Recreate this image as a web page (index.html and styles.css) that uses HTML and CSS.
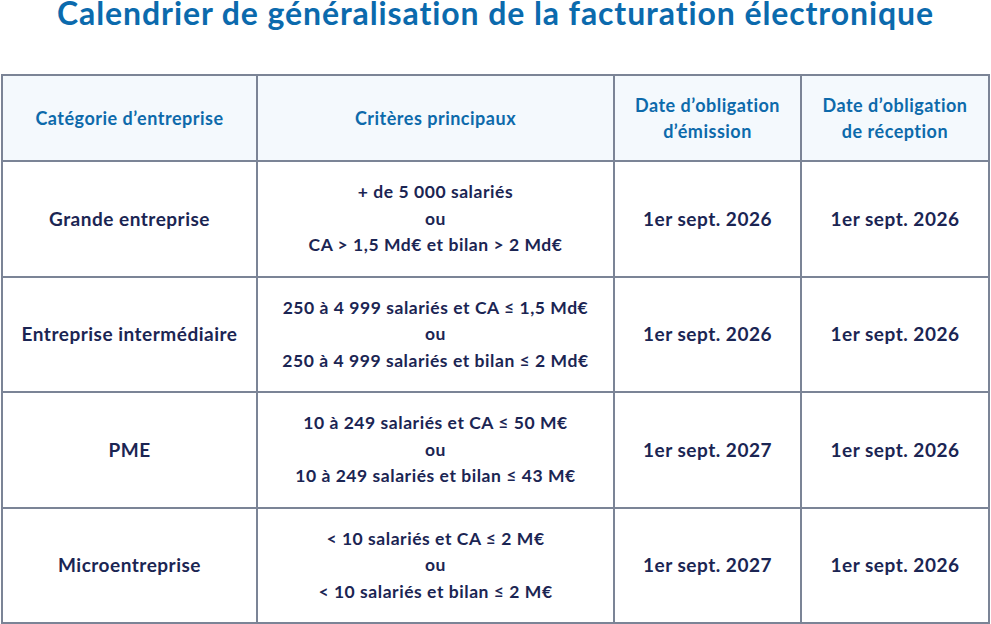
FILE: index.html
```html
<!DOCTYPE html>
<html lang="fr">
<head>
<meta charset="utf-8">
<title>Calendrier</title>
<link rel="stylesheet" href="styles.css">
</head>
<body>
<h1 class="title">Calendrier de généralisation de la facturation électronique</h1>
<table class="cal">
  <colgroup>
    <col class="c1"><col class="c2"><col class="c3"><col class="c4">
  </colgroup>
  <thead>
    <tr>
      <th>Catégorie d’entreprise</th>
      <th>Critères principaux</th>
      <th>Date d’obligation<br>d’émission</th>
      <th>Date d’obligation<br>de réception</th>
    </tr>
  </thead>
  <tbody>
    <tr>
      <td>Grande entreprise</td>
      <td class="crit">+ de 5 000 salariés<br>ou<br>CA &gt; 1,5 Md€ et bilan &gt; 2 Md€</td>
      <td>1er sept. 2026</td>
      <td>1er sept. 2026</td>
    </tr>
    <tr>
      <td>Entreprise intermédiaire</td>
      <td class="crit">250 à 4 999 salariés et CA ≤ 1,5 Md€<br>ou<br>250 à 4 999 salariés et bilan ≤ 2 Md€</td>
      <td>1er sept. 2026</td>
      <td>1er sept. 2026</td>
    </tr>
    <tr>
      <td>PME</td>
      <td class="crit">10 à 249 salariés et CA ≤ 50 M€<br>ou<br>10 à 249 salariés et bilan ≤ 43 M€</td>
      <td>1er sept. 2027</td>
      <td>1er sept. 2026</td>
    </tr>
    <tr>
      <td>Microentreprise</td>
      <td class="crit">&lt; 10 salariés et CA ≤ 2 M€<br>ou<br>&lt; 10 salariés et bilan ≤ 2 M€</td>
      <td>1er sept. 2027</td>
      <td>1er sept. 2026</td>
    </tr>
  </tbody>
</table>
</body>
</html>
```
FILE: styles.css
```css
html, body {
  margin: 0;
  padding: 0;
  background: #ffffff;
}
body {
  font-family: "Lato", "Open Sans", sans-serif;
  font-weight: 700;
}
.title {
  margin: 0;
  height: 74px;
  line-height: 26px;
  text-align: center;
  font-size: 32px;
  letter-spacing: 0.9px;
  font-weight: 700;
  color: #0b6aad;
  white-space: nowrap;
}
.cal {
  margin-left: 1px;
  width: 989px;
  border-collapse: collapse;
  table-layout: fixed;
}
.c1 { width: 255px; }
.c2 { width: 357px; }
.c3 { width: 187px; }
.c4 { width: 188px; }
.cal th, .cal td {
  border: 2px solid #7b8496;
  text-align: center;
  vertical-align: middle;
  padding: 0 2px;
}
.cal th {
  height: 84px;
  background: #f4f9fd;
  color: #0d6aab;
  font-size: 18px;
  letter-spacing: 0.5px;
  line-height: 26px;
}
.cal td {
  height: 113.5px;
  color: #1b2553;
  font-size: 19px;
  letter-spacing: 0.5px;
  line-height: 26.5px;
}
.cal td.crit {
  font-size: 17.5px;
  letter-spacing: 0.55px;
}
```
